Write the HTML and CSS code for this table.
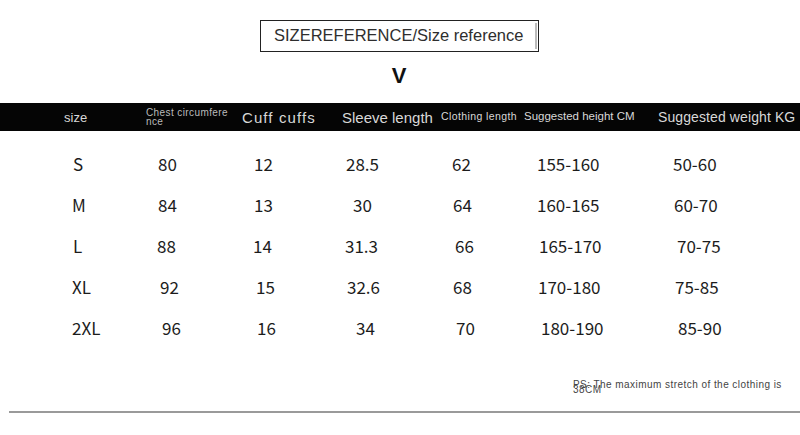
FILE: index.html
```html
<!DOCTYPE html>
<html>
<head>
<meta charset="utf-8">
<link rel="stylesheet" href="styles.css">
</head>
<body>
<div class="page">
  <div class="title"><span class="title-text">SIZEREFERENCE/Size reference</span><span class="title-bar"></span></div>
  <div class="v">V</div>
  <div class="head">
    <div class="h h-size">size</div>
    <div class="h h-chest"><span class="chest-text">Chest circumference</span></div>
    <div class="h h-cuff">Cuff cuffs</div>
    <div class="h h-sleeve">Sleeve length</div>
    <div class="h h-cloth">Clothing length</div>
    <div class="h h-height">Suggested height CM</div>
    <div class="h h-weight">Suggested weight KG</div>
  </div>
  <div class="rows">
    <div class="row">
      <div class="c o1">S</div><div class="c o1">80</div><div class="c o1">12</div><div class="c o1">28.5</div><div class="c">62</div><div class="c">155-160</div><div class="c">50-60</div>
    </div>
    <div class="row">
      <div class="c">M</div><div class="c o1">84</div><div class="c o1">13</div><div class="c o8">30</div><div class="c o1">64</div><div class="c">160-165</div><div class="c o1">60-70</div>
    </div>
    <div class="row">
      <div class="c o1">L</div><div class="c">88</div><div class="c">14</div><div class="c">31.3</div><div class="c o3">66</div><div class="c o2">165-170</div><div class="c o4">70-75</div>
    </div>
    <div class="row">
      <div class="c">XL</div><div class="c o3">92</div><div class="c o3">15</div><div class="c o2">32.6</div><div class="c o1">68</div><div class="c o1">170-180</div><div class="c o2">75-85</div>
    </div>
    <div class="row">
      <div class="c">2XL</div><div class="c o5">96</div><div class="c o4">16</div><div class="c o11">34</div><div class="c o4">70</div><div class="c o4">180-190</div><div class="c o5">85-90</div>
    </div>
  </div>
  <div class="note">PS: The maximum stretch of the clothing is 38CM</div>
  <div class="rule"></div>
</div>
</body>
</html>
```
FILE: styles.css
```css
html, body {
  margin: 0;
  padding: 0;
  background: #fff;
}
.page {
  width: 800px;
  height: 435px;
  padding-top: 20px;
  box-sizing: border-box;
  font-family: "Liberation Sans", Arial, sans-serif;
}
.title {
  margin-left: 260px;
  width: 279px;
  height: 32px;
  box-sizing: border-box;
  border: 1px solid #222;
  display: flex;
  align-items: center;
  justify-content: space-between;
  padding-left: 13px;
  padding-right: 1px;
}
.title-text {
  font-size: 16.5px;
  color: #2e2e2e;
  padding-bottom: 1px;
}
.title-bar {
  width: 2px;
  height: 26px;
  background: #bbb;
}
.v {
  margin-top: 12px;
  height: 24px;
  line-height: 24px;
  text-align: center;
  font-size: 22px;
  font-weight: bold;
  color: #111;
  padding-right: 2px;
}
.head {
  margin-top: 15px;
  height: 28px;
  background: #050505;
  display: flex;
  align-items: center;
  padding-left: 64px;
  color: #d8d8d8;
}
.h {
  flex: none;
  white-space: nowrap;
}
.h-size { width: 82px; font-size: 13px; padding-top: 1px; }
.h-chest { width: 96px; font-size: 10px; line-height: 9px; letter-spacing: 0.4px; color: #bbb; padding-bottom: 1px; white-space: normal; }
.chest-text { display: block; width: 87px; word-break: break-all; }
.h-cuff { width: 100px; font-size: 15px; letter-spacing: 1.1px; }
.h-sleeve { width: 99px; font-size: 15px; }
.h-cloth { width: 83px; font-size: 10.5px; letter-spacing: 0.4px; padding-bottom: 3px; }
.h-height { width: 134px; font-size: 11.5px; padding-bottom: 3px; }
.h-weight { font-size: 14px; letter-spacing: 0.1px; }
.rows {
  margin-top: 12px;
}
.row {
  display: grid;
  grid-template-columns: 85px 96px 92px 107px 85px 136px 1fr;
  padding-left: 72px;
  height: 41px;
  line-height: 41px;
  font-family: "Noto Sans CJK SC", "Noto Sans", sans-serif;
  font-size: 17px;
  color: #1c1c1c;
}
.c { white-space: nowrap; }
.o1 { padding-left: 1px; }
.o2 { padding-left: 2px; }
.o3 { padding-left: 3px; }
.o4 { padding-left: 4px; }
.o5 { padding-left: 5px; }
.o8 { padding-left: 8px; }
.o11 { padding-left: 11px; }
.note {
  margin-top: 34px;
  margin-left: 573px;
  width: 220px;
  font-size: 10px;
  line-height: 5px;
  letter-spacing: 0.45px;
  color: #444;
}
.rule {
  margin-top: 19px;
  margin-left: 9px;
  height: 2px;
  background: #9a9a9a;
}
```
